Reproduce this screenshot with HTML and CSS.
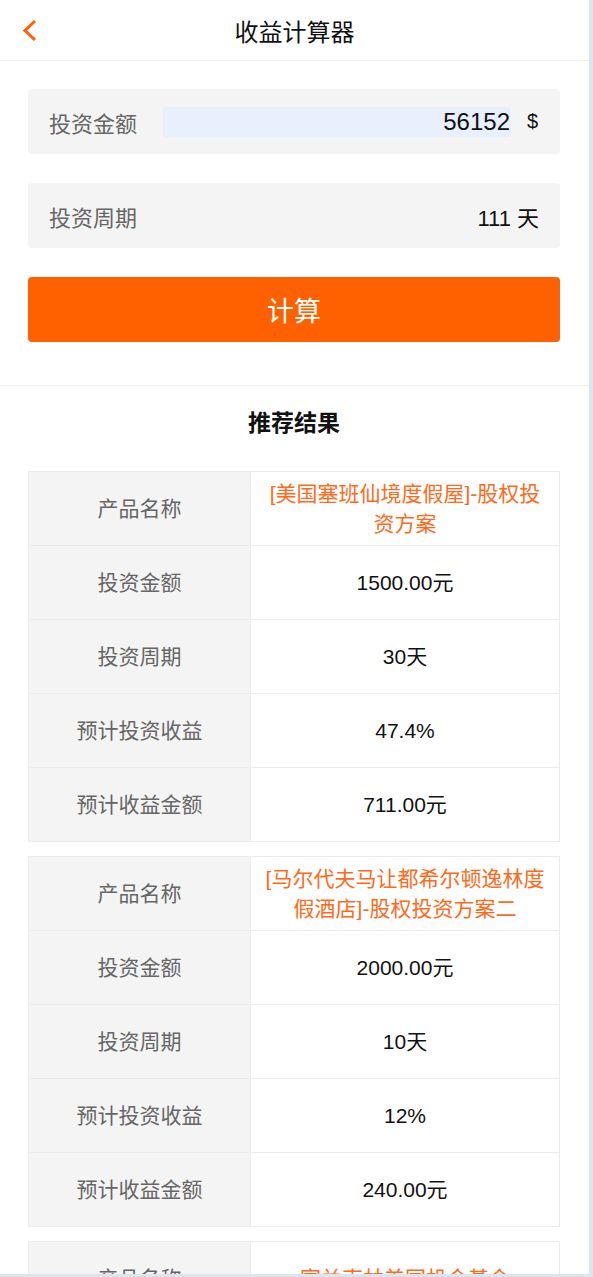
FILE: index.html
```
<!DOCTYPE html>
<html>

<head>
    <meta charset="UTF-8" />
    <title>
        收益计算器
    </title>
    <link rel="stylesheet" href="styles.css">
</head>

<body>
<div class="app">
    <div class="header">
        <div class="back">
            <svg width="20" height="24" viewBox="0 0 20 24">
                <polyline points="14,3 4,12.5 14,22" fill="none" stroke="#ff6000" stroke-width="3" />
            </svg>
        </div>
        <div class="title">收益计算器</div>
    </div>

    <div class="form">
        <div class="field">
            <span class="label">投资金额</span>
            <input class="amount" type="text" value="56152">
            <span class="unit">$</span>
        </div>
        <div class="field">
            <span class="label">投资周期</span>
            <span class="value">111 天</span>
        </div>
        <div class="btn">计算</div>
    </div>

    <div class="result">
        <div class="resultTitle">推荐结果</div>

        <table class="product">
            <tr><td class="key">产品名称</td><td class="name">[美国塞班仙境度假屋]-股权投资方案</td></tr>
            <tr><td class="key">投资金额</td><td>1500.00元</td></tr>
            <tr><td class="key">投资周期</td><td>30天</td></tr>
            <tr><td class="key">预计投资收益</td><td>47.4%</td></tr>
            <tr><td class="key">预计收益金额</td><td>711.00元</td></tr>
        </table>

        <table class="product">
            <tr><td class="key">产品名称</td><td class="name">[马尔代夫马让都希尔顿逸林度假酒店]-股权投资方案二</td></tr>
            <tr><td class="key">投资金额</td><td>2000.00元</td></tr>
            <tr><td class="key">投资周期</td><td>10天</td></tr>
            <tr><td class="key">预计投资收益</td><td>12%</td></tr>
            <tr><td class="key">预计收益金额</td><td>240.00元</td></tr>
        </table>

        <table class="product">
            <tr><td class="key">产品名称</td><td class="name">富兰克林美国机会基金</td></tr>
            <tr><td class="key">投资金额</td><td>3000.00元</td></tr>
            <tr><td class="key">投资周期</td><td>60天</td></tr>
        </table>
    </div>
</div>
</body>

</html>
```

FILE: styles.css
```
html, body {
    margin: 0;
    padding: 0;
    background-color: #dfe4ea;
}

body {
    font-family: "Liberation Sans", "Noto Sans CJK SC", sans-serif;
    color: #111;
}

.app {
    width: 589px;
    height: 1274px;
    overflow: hidden;
    background-color: white;
}

.header {
    height: 60px;
    border-bottom: 1px solid #eeeeee;
    display: flex;
    align-items: center;
    justify-content: center;
    position: relative;
}

.back {
    position: absolute;
    left: 21px;
    top: 18px;
}

.title {
    font-size: 24px;
}

.form {
    padding: 28px 29px 43px 28px;
    border-bottom: 1px solid #f0f0f0;
}

.field {
    height: 65px;
    background-color: #f4f4f4;
    border-radius: 4px;
    display: flex;
    align-items: center;
    padding: 0 21px;
    margin-bottom: 29px;
    font-size: 22px;
}

.label {
    color: #666;
    width: 114px;
}

.amount {
    width: 348px;
    height: 30px;
    box-sizing: border-box;
    border: none;
    border-radius: 3px;
    background-color: #e8f0fe;
    text-align: right;
    font-family: inherit;
    font-size: 24px;
    color: #111;
    padding: 0 1px 0 0;
    outline: none;
}

.unit {
    margin-left: 16px;
    font-size: 20px;
}

.value {
    margin-left: auto;
}

.btn {
    height: 65px;
    background-color: #ff6000;
    border-radius: 4px;
    color: white;
    font-size: 27px;
    display: flex;
    align-items: center;
    justify-content: center;
}

.result {
    padding: 0 29px 0 28px;
}

.resultTitle {
    height: 70px;
    margin-bottom: 15px;
    display: flex;
    align-items: center;
    justify-content: center;
    font-size: 23px;
    font-weight: bold;
}

.product {
    width: 100%;
    border-collapse: collapse;
    margin-bottom: 14px;
    font-size: 21px;
}

.product td {
    border: 1px solid #ececec;
    height: 73px;
    text-align: center;
    padding: 0 12px;
    line-height: 30px;
}

.product .key {
    width: 197px;
    background-color: #f4f4f4;
    color: #666;
}

.product .name {
    color: #ff6a1a;
}
```
